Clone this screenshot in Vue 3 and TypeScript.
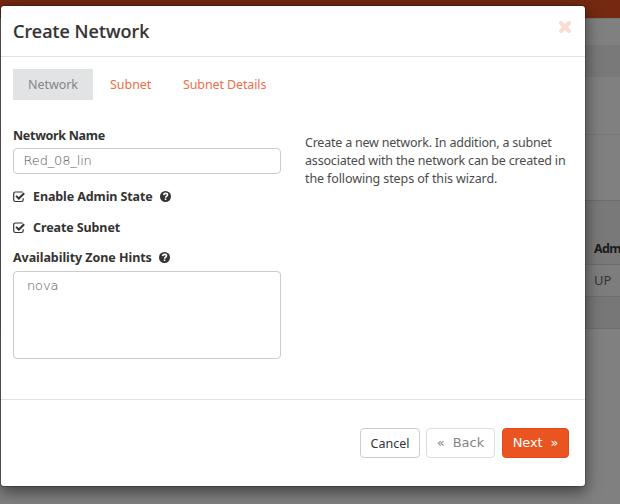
<script setup lang="ts">
import { ref } from 'vue'

interface Step { id: string; label: string }
const steps: Step[] = [
  { id: 'network', label: 'Network' },
  { id: 'subnet', label: 'Subnet' },
  { id: 'details', label: 'Subnet Details' },
]
const active = ref('network')
const name = ref('Red_08_lin')
const helpLines = [
  'Create a new network. In addition, a subnet',
  'associated with the network can be created in',
  'the following steps of this wizard.',
]
</script>

<template>
  <div class="screen">
    <div class="page">
      <div class="topbar"></div>
      <div class="crumb"></div>
      <div class="heading"></div>
      <div class="spacer"></div>
      <div class="tools"></div>
      <div class="cell head"><span>Adm</span></div>
      <div class="cell row"><span>UP</span></div>
      <div class="cell foot"></div>
    </div>

    <section class="modal">
      <header>
        <h3>Create Network</h3>
        <button class="close" aria-label="Close">
          <svg width="14" height="14" viewBox="0 0 14 14"><path d="M3 3 11 11M11 3 3 11" /></svg>
        </button>
      </header>
      <div class="body">
        <nav>
          <a v-for="s in steps" :key="s.id" :class="[s.id, { active: active === s.id }]" @click="active = s.id">{{ s.label }}</a>
        </nav>
        <div class="columns">
          <form @submit.prevent>
            <label class="name">Network Name</label>
            <input v-model="name" type="text" />
            <label v-for="c in ['Enable Admin State', 'Create Subnet']" :key="c" class="check">
              <svg class="box" width="13" height="12" viewBox="0 0 13 12">
                <path class="frame" d="M9.7 1.2Q9.3 1 8.8 1H2.4Q.7 1 .7 2.7V8.8Q.7 10.5 2.4 10.5H8.5Q10.2 10.5 10.2 8.8V7.3" />
                <path class="tick" d="M3.1 4.9 5.8 7.5 11.2 2.2" />
              </svg>
              <span>{{ c }}</span>
              <svg v-if="c !== 'Create Subnet'" class="help" width="11" height="11" viewBox="0 0 11 11">
                <circle cx="5.5" cy="5.5" r="5.5" />
                <path d="M3.5 4.1C3.8 2.9 4.6 2.4 5.6 2.4 6.8 2.4 7.5 3.1 7.5 4 7.5 5.2 5.6 5.2 5.6 6.7" />
                <path d="M5.55 7.5V9" />
              </svg>
            </label>
            <label class="zone">
              <span>Availability Zone Hints</span>
              <svg class="help" width="11" height="11" viewBox="0 0 11 11">
                <circle cx="5.5" cy="5.5" r="5.5" />
                <path d="M3.5 4.1C3.8 2.9 4.6 2.4 5.6 2.4 6.8 2.4 7.5 3.1 7.5 4 7.5 5.2 5.6 5.2 5.6 6.7" />
                <path d="M5.55 7.5V9" />
              </svg>
            </label>
            <div class="list"><span>nova</span></div>
          </form>
          <p><span v-for="(l, i) in helpLines" :key="l" :class="'line' + i">{{ l }}</span></p>
        </div>
      </div>
      <footer>
        <button class="btn cancel">Cancel</button>
        <button class="btn back"><span>«</span><span>Back</span></button>
        <button class="btn next"><span>Next</span><span>»</span></button>
      </footer>
    </section>
  </div>
</template>

<style>
body { margin: 0; overflow: hidden; background: #808080; }
</style>

<style scoped>
* { box-sizing: border-box; }
.screen { position: relative; width: 620px; height: 504px; overflow: hidden; font-family: "Noto Sans", "Open Sans", sans-serif; font-size: 13px; color: #333; background: #808080; }
.page { position: absolute; inset: 0; display: flex; flex-direction: column; }
.topbar { height: 18px; background: #752910; }
.crumb { height: 27px; background: #808080; border-top: 1px solid #737373; }
.heading { height: 32px; background: #797979; }
.spacer { height: 58px; border-bottom: 1px solid #777; }
.tools { height: 65px; }
.cell { height: 32px; padding-left: 594px; line-height: 31px; white-space: nowrap; color: #333; background: #797979; border-top: 1px solid #6d6d6d; }
.head { height: 64px; padding-top: 32px; font-weight: 700; color: #1a1a1a; font-size: 12.5px; letter-spacing: -0.6px; }
.row { background: #7d7d7d; }
.foot { height: 33px; border-bottom: 1px solid #6f6f6f; background: #777; }
.modal { position: absolute; left: 0; top: 5px; width: 586px; height: 482px; display: flex; flex-direction: column; background: #fff; background-clip: padding-box; border: 1px solid rgba(0,0,0,.2); border-radius: 4px; box-shadow: 0 5px 15px rgba(0,0,0,.5); }
header { height: 51px; flex: none; display: flex; justify-content: space-between; padding: 14px 13px 0 12px; border-bottom: 1px solid #e2e3e4; }
h3 { margin: 0; font-size: 18px; font-weight: 500; line-height: 23px; letter-spacing: .05px; -webkit-text-stroke: .2px #333; }
button { font-family: inherit; }
.close { width: 14px; height: 14px; padding: 0; border: 0; background: none; }
.close svg { display: block; }
.close path { stroke: #fbdcd2; stroke-width: 4; stroke-linecap: round; }
.body { height: 342px; flex: none; padding: 12px 12px 0; }
nav { display: flex; gap: 2px; height: 31px; font-size: 12.5px; }
nav a { color: #eb7047; line-height: 31px; padding: 0 15px; white-space: nowrap; letter-spacing: -.05px; }
nav a.active { background: #e2e3e4; color: #858687; }
nav .network { width: 80px; }
nav .subnet { width: 71px; }
nav .details { letter-spacing: -.12px; }
.columns { display: flex; gap: 24px; padding-top: 27px; }
form { width: 268px; flex: none; display: flex; flex-direction: column; }
label { font-size: 12.5px; font-weight: 700; line-height: 18px; height: 18px; color: #333; white-space: nowrap; letter-spacing: -.1px; }
.name { letter-spacing: -.35px; }
input { height: 26px; margin: 3px 0 0; padding: 0 9.5px 1px; border: 1px solid #ccc; border-radius: 4px; font: 200 13px "DejaVu Sans", sans-serif; letter-spacing: -.15px; color: #555; background: #fff; outline: none; }
.name { letter-spacing: -.3px; }
.check { display: flex; align-items: center; margin-top: 14px; }
.check + .check { margin-top: 13px; }
.box { width: 13px; margin-right: 7px; }
path { fill: none; stroke: #333; }
.frame { stroke-width: 1.2; }
.tick { stroke-width: 2; }
.help { margin: -1px 0 0 7px; }
.help circle { fill: #333; }
.help path { stroke: #fff; stroke-width: 1.6; }
.zone { display: flex; align-items: center; margin-top: 12px; }
.zone span { letter-spacing: -.06px; }
.list { height: 88px; margin-top: 4px; padding: 5px 13px; border: 1px solid #ccc; border-radius: 4px; font: 200 13px/18px "DejaVu Sans", sans-serif; letter-spacing: -.15px; color: #555; }
p { margin: 7px 0 0; line-height: 18px; color: #4b4b4b; font-size: 12.5px; }
p span { display: block; white-space: nowrap; }
.line0 { letter-spacing: -.22px; }
.line1 { letter-spacing: -.18px; }
.line2 { letter-spacing: -.11px; }
footer { flex: 1; display: flex; justify-content: flex-end; padding: 28px 16px 0; border-top: 1px solid #e2e3e4; }
.btn { height: 30px; padding: 0; display: flex; align-items: center; justify-content: center; border: 1px solid #ccc; border-radius: 4px; background: #fff; color: #333; white-space: pre; }
.cancel { width: 60px; margin-right: 6px; font-size: 12.5px; }
.back, .next { font: 13px "DejaVu Sans", sans-serif; gap: 8px; padding-bottom: 1px; }
.back { width: 69px; margin-right: 7px; color: #858585; border-color: #ddd; }
.next { width: 67px; color: #fff; background: #e95420; border-color: #e04b18; letter-spacing: -.1px; }
</style>
